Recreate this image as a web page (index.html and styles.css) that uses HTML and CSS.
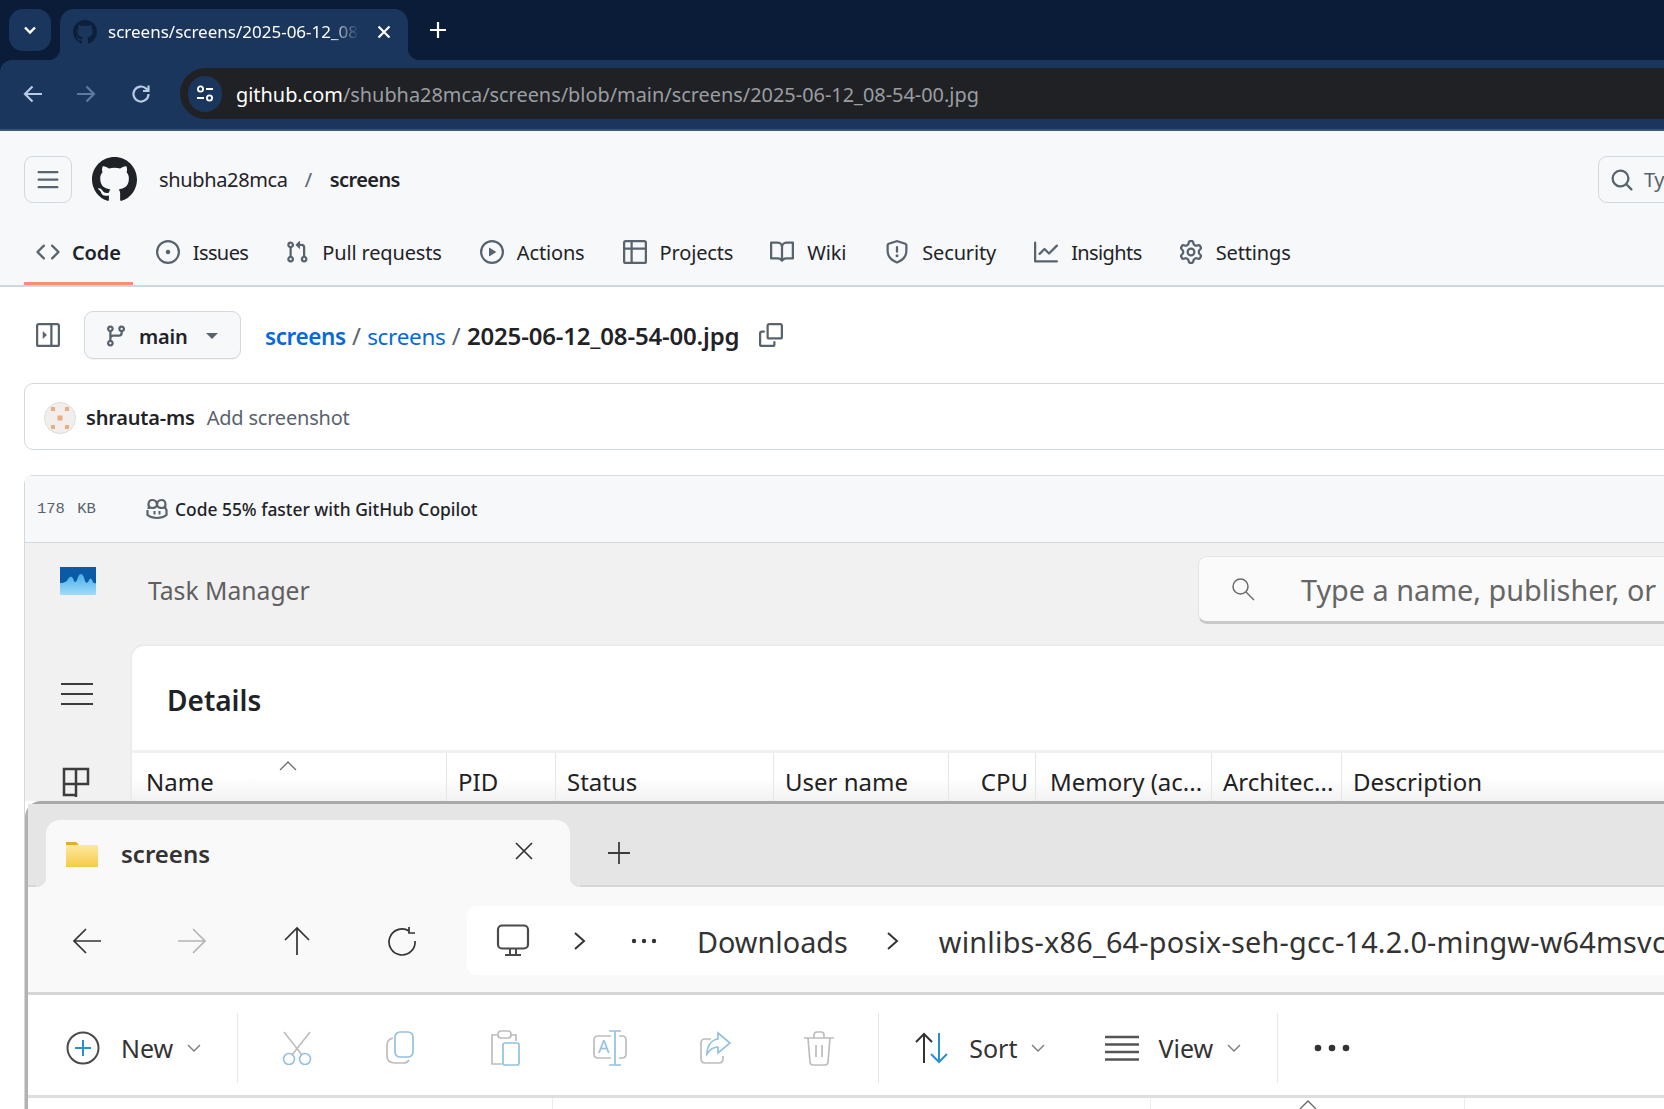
FILE: index.html
```html
<!doctype html>
<html>
<head>
	<meta charset="utf-8" />
	<title>screens/screens/2025-06-12_08-54-00.jpg</title>
	<link rel="stylesheet" href="styles.css">
</head>
<body>
	<!-- browser chrome -->
	<div class="tabstrip">
		<div class="tabsearch"><svg width="16" height="16" viewBox="0 0 16 16"><path d="M3 5.500 8 10.500 13 5.500" fill="none" stroke="#fff" stroke-width="2.400"/></svg></div>
		<div class="browsertab">
			<svg class="favicon" width="24" height="24" viewBox="0 0 16 16"><path fill="#0d1f3a" d="M8 0c4.420 0 8 3.580 8 8a8.013 8.013 0 0 1-5.450 7.590c-.4.080-.55-.17-.55-.38 0-.27.010-1.130.010-2.200 0-.75-.25-1.230-.54-1.480 1.780-.2 3.650-.88 3.650-3.950 0-.88-.31-1.590-.82-2.150.080-.2.360-1.020-.080-2.120 0 0-.67-.22-2.200.820-.64-.18-1.320-.27-2-.27-.68 0-1.360.090-2 .27-1.530-1.030-2.200-.82-2.200-.82-.44 1.100-.16 1.920-.080 2.120-.51.560-.82 1.280-.82 2.150 0 3.060 1.860 3.750 3.640 3.950-.23.2-.44.55-.51 1.070-.46.210-1.610.55-2.330-.66-.15-.24-.6-.83-1.230-.82-.67.010-.27.380.010.530.34.190.73.9.820 1.130.16.450.68 1.310 2.690.94 0 .67.010 1.300.010 1.490 0 .210-.15.450-.55.380A7.995 7.995 0 0 1 0 8c0-4.420 3.580-8 8-8Z"/></svg>
			<span class="tabtitle">screens/screens/2025-06-12_08</span>
			<svg width="14" height="14" viewBox="0 0 14 14"><path d="M1.500 1.500 12.500 12.500M12.500 1.500 1.500 12.500" stroke="#fff" stroke-width="2.200"/></svg>
		</div>
		<svg class="newtab" width="18" height="18" viewBox="0 0 18 18"><path d="M9 1V17M1 9H17" stroke="#fff" stroke-width="2.200"/></svg>
	</div>
	<div class="toolbar">
		<svg width="22" height="22" viewBox="0 0 22 22"><path d="M20 11H3M10.500 3.500 3 11l7.500 7.500" fill="none" stroke="#b9cbe4" stroke-width="2.200"/></svg>
		<svg class="toolforward" width="22" height="22" viewBox="0 0 22 22"><path d="M2 11H19M11.500 3.500 19 11l-7.500 7.500" fill="none" stroke="#5d7a9f" stroke-width="2.200"/></svg>
		<svg class="toolreload" width="22" height="22" viewBox="0 0 22 22"><path d="M18.500 11a7.500 7.500 0 1 1-2.200-5.300L18.500 8M18.500 2.500V8H13" fill="none" stroke="#b9cbe4" stroke-width="2.200"/></svg>
		<div class="omnibox">
			<div class="siteinfo"><svg width="20" height="20" viewBox="0 0 20 20"><circle cx="5.500" cy="5" r="2.600" fill="none" stroke="#fff" stroke-width="1.800"/><path d="M11 5h7M2 14h7" stroke="#fff" stroke-width="1.800"/><circle cx="14.500" cy="14" r="2.600" fill="none" stroke="#fff" stroke-width="1.800"/></svg></div>
			<span class="url"><b>github.com</b>/shubha28mca/screens/blob/main/screens/2025-06-12_08-54-00.jpg</span>
		</div>
	</div>

	<!-- github header -->
	<div class="ghheader">
		<div class="ghtop">
			<div class="menubtn"><svg width="24" height="24" viewBox="0 0 16 16"><path fill="#59636e" d="M1 2.750A.75.75 0 0 1 1.750 2h12.500a.75.75 0 0 1 0 1.500H1.750A.75.75 0 0 1 1 2.750Zm0 5A.75.75 0 0 1 1.750 7h12.500a.75.75 0 0 1 0 1.500H1.750A.75.75 0 0 1 1 7.750ZM1.750 12h12.500a.75.75 0 0 1 0 1.500H1.750a.75.75 0 0 1 0-1.500Z"/></svg></div>
			<svg class="ghlogo" width="45" height="45" viewBox="0 0 16 16"><path fill="#1f2328" d="M8 0c4.420 0 8 3.580 8 8a8.013 8.013 0 0 1-5.450 7.590c-.4.080-.55-.17-.55-.38 0-.27.010-1.130.010-2.200 0-.75-.25-1.230-.54-1.480 1.780-.2 3.650-.88 3.650-3.950 0-.88-.31-1.590-.82-2.150.080-.2.360-1.020-.080-2.120 0 0-.67-.22-2.200.820-.64-.18-1.320-.27-2-.27-.68 0-1.360.090-2 .27-1.530-1.030-2.200-.82-2.200-.82-.44 1.100-.16 1.920-.080 2.120-.51.560-.82 1.280-.82 2.150 0 3.060 1.860 3.750 3.640 3.950-.23.2-.44.55-.51 1.070-.46.210-1.610.55-2.330-.66-.15-.24-.6-.83-1.230-.82-.67.010-.27.380.010.530.34.190.73.9.820 1.130.16.450.68 1.310 2.690.94 0 .67.010 1.300.010 1.490 0 .210-.15.450-.55.380A7.995 7.995 0 0 1 0 8c0-4.420 3.580-8 8-8Z"/></svg>
			<span class="owner">shubha28mca</span>
			<span class="ownerslash">/</span>
			<span class="reponame">screens</span>
			<div class="ghsearch"><svg width="24" height="24" viewBox="0 0 16 16"><path fill="#59636e" d="M10.680 11.740a6 6 0 0 1-7.922-8.982 6 6 0 0 1 8.982 7.922l3.040 3.040a.749.749 0 0 1-.326 1.275.749.749 0 0 1-.734-.215ZM11.500 7a4.499 4.499 0 1 0-8.997 0A4.499 4.499 0 0 0 11.500 7Z"/></svg><span>Ty</span></div>
		</div>
		<div class="repotabs">
			<div class="repotab selected"><svg width="24" height="24" viewBox="0 0 16 16"><path d="m11.280 3.220 4.250 4.250a.75.75 0 0 1 0 1.060l-4.250 4.250a.749.749 0 0 1-1.275-.326.749.749 0 0 1 .215-.734L13.940 8l-3.720-3.720a.749.749 0 0 1 .326-1.275.749.749 0 0 1 .734.215Zm-6.560 0a.751.751 0 0 1 1.042.018.751.751 0 0 1 .018 1.042L2.060 8l3.720 3.720a.749.749 0 0 1-.326 1.275.749.749 0 0 1-.734-.215L.47 8.530a.75.75 0 0 1 0-1.060Z"/></svg>Code</div>
			<div class="repotab"><svg width="24" height="24" viewBox="0 0 16 16"><path d="M8 9.500a1.500 1.500 0 1 0 0-3 1.500 1.500 0 0 0 0 3Z"/><path d="M8 0a8 8 0 1 1 0 16A8 8 0 0 1 8 0ZM1.500 8a6.500 6.500 0 1 0 13 0 6.500 6.500 0 0 0-13 0Z"/></svg>Issues</div>
			<div class="repotab"><svg width="24" height="24" viewBox="0 0 16 16"><path d="M1.500 3.250a2.250 2.250 0 1 1 3 2.122v5.256a2.251 2.251 0 1 1-1.500 0V5.372A2.250 2.250 0 0 1 1.500 3.250Zm5.677-.177L9.573.677A.25.25 0 0 1 10 .854V2.500h1A2.500 2.500 0 0 1 13.500 5v5.628a2.251 2.251 0 1 1-1.500 0V5a1 1 0 0 0-1-1h-1v1.646a.25.25 0 0 1-.427.177L7.177 3.427a.25.25 0 0 1 0-.354ZM3.750 2.500a.75.75 0 1 0 0 1.500.75.75 0 0 0 0-1.500Zm0 9.500a.75.75 0 1 0 0 1.500.75.75 0 0 0 0-1.500Zm8.250.75a.75.75 0 1 0 1.500 0 .75.75 0 0 0-1.500 0Z"/></svg>Pull requests</div>
			<div class="repotab"><svg width="24" height="24" viewBox="0 0 16 16"><path d="M8 0a8 8 0 1 1 0 16A8 8 0 0 1 8 0ZM1.500 8a6.500 6.500 0 1 0 13 0 6.500 6.500 0 0 0-13 0Zm4.879-2.773 4.264 2.559a.25.25 0 0 1 0 .428l-4.264 2.559A.25.25 0 0 1 6 10.559V5.442a.25.25 0 0 1 .379-.215Z"/></svg>Actions</div>
			<div class="repotab"><svg width="24" height="24" viewBox="0 0 16 16"><path d="M0 1.750C0 .784.784 0 1.750 0h12.500C15.216 0 16 .784 16 1.750v12.500A1.750 1.750 0 0 1 14.250 16H1.750A1.750 1.750 0 0 1 0 14.250ZM6.500 6.500v8h7.750a.25.25 0 0 0 .25-.25V6.500Zm8-1.500V1.750a.25.25 0 0 0-.25-.25H6.500V5Zm-13 1.500v7.750c0 .138.112.25.25.25H5v-8ZM5 5V1.500H1.750a.25.25 0 0 0-.25.25V5Z"/></svg>Projects</div>
			<div class="repotab"><svg width="24" height="24" viewBox="0 0 16 16"><path d="M0 1.750A.75.75 0 0 1 .75 1h4.253c1.227 0 2.317.59 3 1.501A3.743 3.743 0 0 1 11.006 1h4.245a.75.75 0 0 1 .75.75v10.500a.75.75 0 0 1-.75.75h-4.507a2.250 2.250 0 0 0-1.591.659l-.622.621a.75.75 0 0 1-1.060 0l-.622-.621A2.250 2.250 0 0 0 5.258 13H.75a.75.75 0 0 1-.75-.75Zm7.251 10.324.004-5.073-.002-2.253A2.250 2.250 0 0 0 5.003 2.500H1.500v9h3.757a3.750 3.750 0 0 1 1.994.574ZM8.755 4.750l-.004 7.322a3.752 3.752 0 0 1 1.992-.572H14.500v-9h-3.495a2.250 2.250 0 0 0-2.250 2.250Z"/></svg>Wiki</div>
			<div class="repotab"><svg width="24" height="24" viewBox="0 0 16 16"><path d="M7.467.133a1.748 1.748 0 0 1 1.066 0l5.250 1.680A1.750 1.750 0 0 1 15 3.480V7c0 1.566-.32 3.182-1.303 4.682-.983 1.498-2.585 2.813-5.032 3.855a1.697 1.697 0 0 1-1.330 0c-2.447-1.042-4.049-2.357-5.032-3.855C1.320 10.182 1 8.566 1 7V3.480a1.750 1.750 0 0 1 1.217-1.667Zm.61 1.429a.25.25 0 0 0-.153 0l-5.250 1.680a.25.25 0 0 0-.174.238V7c0 1.358.275 2.666 1.057 3.860.784 1.194 2.121 2.340 4.366 3.297a.196.196 0 0 0 .154 0c2.245-.956 3.582-2.104 4.366-3.298C13.225 9.666 13.500 8.360 13.500 7V3.480a.251.251 0 0 0-.174-.237l-5.250-1.680ZM8.750 4.750v3a.75.75 0 0 1-1.500 0v-3a.75.75 0 0 1 1.500 0ZM9 10.500a1 1 0 1 1-2 0 1 1 0 0 1 2 0Z"/></svg>Security</div>
			<div class="repotab"><svg width="24" height="24" viewBox="0 0 16 16"><path d="M1.500 1.750V13.500h13.750a.75.75 0 0 1 0 1.500H.75a.75.75 0 0 1-.75-.75V1.750a.75.75 0 0 1 1.500 0Zm14.280 2.530-5.250 5.250a.75.75 0 0 1-1.060 0L7 7.060 4.280 9.780a.751.751 0 0 1-1.042-.018.751.751 0 0 1-.018-1.042l3.250-3.250a.75.75 0 0 1 1.060 0L10 7.940l4.720-4.720a.751.751 0 0 1 1.042.018.751.751 0 0 1 .018 1.042Z"/></svg>Insights</div>
			<div class="repotab"><svg width="24" height="24" viewBox="0 0 16 16"><path d="M8 0a8.200 8.200 0 0 1 .701.031C9.444.095 9.990.645 10.160 1.290l.288 1.107c.018.066.079.158.212.224.231.114.454.243.668.386.123.082.233.09.299.071l1.103-.303c.644-.176 1.392.021 1.820.63.27.385.506.792.704 1.218.315.675.111 1.422-.364 1.891l-.814.806c-.049.048-.098.147-.088.294.016.257.016.515 0 .772-.01.147.038.246.088.294l.814.806c.475.469.679 1.216.364 1.891a7.977 7.977 0 0 1-.704 1.217c-.428.61-1.176.807-1.820.63l-1.102-.302c-.067-.019-.177-.011-.3.071a5.909 5.909 0 0 1-.668.386c-.133.066-.194.158-.211.224l-.29 1.106c-.168.646-.715 1.196-1.458 1.260a8.006 8.006 0 0 1-1.402 0c-.743-.064-1.289-.614-1.458-1.260l-.289-1.106c-.018-.066-.079-.158-.212-.224a5.738 5.738 0 0 1-.668-.386c-.123-.082-.233-.09-.299-.071l-1.103.303c-.644.176-1.392-.021-1.820-.63a8.120 8.120 0 0 1-.704-1.218c-.315-.675-.111-1.422.363-1.891l.815-.806c.05-.048.098-.147.088-.294a6.214 6.214 0 0 1 0-.772c.01-.147-.038-.246-.088-.294l-.815-.806C.635 6.045.431 5.298.746 4.623a7.920 7.920 0 0 1 .704-1.217c.428-.61 1.176-.807 1.820-.63l1.102.302c.067.019.177.011.3-.071.214-.143.437-.272.668-.386.133-.066.194-.158.211-.224l.29-1.106C6.009.645 6.556.095 7.299.03 7.530.01 7.764 0 8 0Zm-.571 1.525c-.036.003-.108.036-.137.146l-.289 1.105c-.147.561-.549.967-.998 1.189-.173.086-.34.183-.5.29-.417.278-.97.423-1.529.27l-1.103-.303c-.109-.03-.175.016-.195.045-.22.312-.412.644-.573.99-.014.031-.021.11.059.19l.815.806c.411.406.562.957.53 1.456a4.709 4.709 0 0 0 0 .582c.032.499-.119 1.050-.53 1.456l-.815.806c-.081.08-.073.159-.059.19.162.346.353.677.573.989.02.03.085.076.195.046l1.102-.303c.56-.153 1.113-.008 1.530.27.161.107.328.204.501.29.447.222.85.629.997 1.189l.289 1.105c.029.109.101.143.137.146a6.600 6.600 0 0 0 1.142 0c.036-.003.108-.036.137-.146l.289-1.105c.147-.561.549-.967.998-1.189.173-.086.34-.183.5-.29.417-.278.97-.423 1.529-.27l1.103.303c.109.029.175-.016.195-.045.22-.313.411-.644.573-.99.014-.031.021-.11-.059-.19l-.815-.806c-.411-.406-.562-.957-.53-1.456a4.709 4.709 0 0 0 0-.582c-.032-.499.119-1.050.53-1.456l.815-.806c.081-.08.073-.159.059-.19a6.464 6.464 0 0 0-.573-.989c-.02-.03-.085-.076-.195-.046l-1.102.303c-.56.153-1.113.008-1.530-.27a4.440 4.440 0 0 0-.501-.29c-.447-.222-.85-.629-.997-1.189l-.289-1.105c-.029-.11-.101-.143-.137-.146a6.600 6.600 0 0 0-1.142 0ZM11 8a3 3 0 1 1-6 0 3 3 0 0 1 6 0ZM9.500 8a1.500 1.500 0 1 0-3.001.001A1.500 1.500 0 0 0 9.500 8Z"/></svg>Settings</div>
		</div>
	</div>

	<!-- file view -->
	<div class="content">
		<div class="pathrow">
			<svg class="paneltoggle" width="24" height="24" viewBox="0 0 16 16"><path fill="#59636e" d="M0 1.750C0 .784.784 0 1.750 0h12.500C15.216 0 16 .784 16 1.750v12.500A1.750 1.750 0 0 1 14.250 16H1.750A1.750 1.750 0 0 1 0 14.250Zm1.750-.25a.25.25 0 0 0-.25.25v12.500c0 .138.112.25.25.25H9.500v-13Zm12.500 13a.25.25 0 0 0 .25-.25V1.750a.25.25 0 0 0-.25-.25H11v13Z"/><path fill="#59636e" d="M4.500 5.300 7.300 8l-2.800 2.700Z"/></svg>
			<div class="branchbtn">
				<svg width="24" height="24" viewBox="0 0 16 16"><path fill="#59636e" d="M9.500 3.250a2.250 2.250 0 1 1 3 2.122V6A2.500 2.500 0 0 1 10 8.500H6a1 1 0 0 0-1 1v1.128a2.251 2.251 0 1 1-1.500 0V5.372a2.250 2.250 0 1 1 1.500 0v1.836A2.493 2.493 0 0 1 6 7h4a1 1 0 0 0 1-1v-.628A2.250 2.250 0 0 1 9.500 3.250Zm-6 0a.75.75 0 1 0 1.500 0 .75.75 0 0 0-1.500 0Zm8.250-.75a.75.75 0 1 0 0 1.500.75.75 0 0 0 0-1.500ZM4.250 12a.75.75 0 1 0 0 1.500.75.75 0 0 0 0-1.500Z"/></svg>
				<span>main</span>
				<div class="caret"></div>
			</div>
			<div class="crumbs"><a class="crumbroot">screens</a> <i>/</i> <a>screens</a> <i>/</i> <strong>2025-06-12_08-54-00.jpg</strong></div>
			<svg class="copyicon" width="24" height="24" viewBox="0 0 16 16"><path fill="#59636e" d="M0 6.750C0 5.784.784 5 1.750 5h1.500a.75.75 0 0 1 0 1.500h-1.500a.25.25 0 0 0-.25.25v7.500c0 .138.112.25.25.25h7.500a.25.25 0 0 0 .25-.25v-1.500a.75.75 0 0 1 1.500 0v1.500A1.750 1.750 0 0 1 9.250 16h-7.500A1.750 1.750 0 0 1 0 14.250Z"/><path fill="#59636e" d="M5 1.750C5 .784 5.784 0 6.750 0h7.500C15.216 0 16 .784 16 1.750v7.500A1.750 1.750 0 0 1 14.250 11h-7.500A1.750 1.750 0 0 1 5 9.250Zm1.750-.25a.25.25 0 0 0-.25.25v7.500c0 .138.112.25.25.25h7.500a.25.25 0 0 0 .25-.25v-7.500a.25.25 0 0 0-.25-.25Z"/></svg>
		</div>

		<div class="commitbox">
			<svg class="avatar" width="32" height="32" viewBox="0 0 32 32"><circle cx="16" cy="16" r="15.500" fill="#f1eeeb" stroke="#e0ddd9"/><path fill="#e8ae82" d="M13.500 13.500h5v5h-5ZM7 5h4v4H7ZM21 5h4v4h-4ZM7 23h4v4H7ZM21 23h4v4h-4Z"/></svg>
			<span class="author">shrauta-ms</span>
			<span class="message">Add screenshot</span>
		</div>

		<div class="filebox">
			<div class="fileinfo">
				<span class="filesize">178 KB</span>
				<svg width="24" height="24" viewBox="0 0 24 24"><path fill="none" stroke="#59636e" stroke-width="2.200" d="M12 8.500c-1 2-3 2.500-5 2.500-2.500 0-3.500-1.500-3.500-3.500C3.500 4.500 5 3 7.500 3s4.500 1.500 4.500 5.500c0-4 2-5.500 4.500-5.500s4 1.500 4 4.500c0 2-1 3.500-3.500 3.500-2 0-4-.5-5-2.500ZM2.500 13v5c2.500 2 6 3 9.500 3s7-1 9.500-3v-5l-1-1.500v-1M3.500 10.500V12"/><path fill="#59636e" d="M8.500 14h2v3.500h-2ZM13.500 14h2v3.500h-2Z"/></svg>
				<span class="copilot">Code 55% faster with GitHub Copilot</span>
			</div>

			<!-- the screenshot in the file: task manager -->
			<div class="taskmgr">
				<div class="tmtop">
					<svg class="tmlogo" width="36" height="28" viewBox="0 0 36 28"><defs><linearGradient id="tmsky" x1="0" y1="0" x2="0" y2="1"><stop offset="0" stop-color="#2f9fe6"/><stop offset="1" stop-color="#9ddcf9"/></linearGradient></defs><rect width="36" height="28" rx="1.500" fill="url(#tmsky)"/><path fill="#0b5aa6" d="M0 0h36v16c-2 1-3-.5-4-3-1-2-2-2-3 0-1 3-3 4-4 1-1-4-2-7-4-7s-3 3-4 6c-1 2-2 3-3 1-1-3-2-5-4-4-2 1-3 5-5 5-2 1-3 1-5 1Z"/></svg>
					<span class="tmtitle">Task Manager</span>
					<div class="tmsearch">
						<svg width="24" height="24" viewBox="0 0 24 24"><circle cx="9.500" cy="9.500" r="7.500" fill="none" stroke="#6b6b6b" stroke-width="1.500"/><path d="M15 15 23 23" stroke="#6b6b6b" stroke-width="1.500"/></svg>
						<span>Type a name, publisher, or</span>
					</div>
				</div>
				<div class="tmmain">
					<div class="tmside">
						<svg width="32" height="24" viewBox="0 0 32 24"><path d="M0 2H32M0 12H32M0 22H32" stroke="#3c3c3c" stroke-width="2.200"/></svg>
						<svg class="tmperf" width="30" height="32" viewBox="0 0 30 32"><path fill="none" stroke="#3c3c3c" stroke-width="2.500" d="M3 3h24v15H3ZM15 3V31M3 18V29h12"/></svg>
					</div>
					<div class="tmpanel">
						<div class="tmheading">Details</div>
						<div class="tmcols">
							<div class="tmcol tmname">Name<svg width="18" height="10" viewBox="0 0 18 10"><path d="M1 9 9 1l8 8" fill="none" stroke="#6b6b6b" stroke-width="1.300"/></svg></div>
							<div class="tmcol">PID</div>
							<div class="tmcol">Status</div>
							<div class="tmcol">User name</div>
							<div class="tmcol tmright">CPU</div>
							<div class="tmcol tmmemory">Memory (ac...</div>
							<div class="tmcol">Architec...</div>
							<div class="tmcol tmlast">Description</div>
						</div>
					</div>
				</div>
			</div>

			<!-- file explorer on top of it -->
			<div class="explorer">
				<div class="extabs">
					<div class="extab">
						<svg width="34" height="26" viewBox="0 0 34 26"><path fill="#e3ae2f" d="M1 1h10l3 3H1Z"/><defs><linearGradient id="folder" x1="0" y1="0" x2="0" y2="1"><stop offset="0" stop-color="#fce9a0"/><stop offset="1" stop-color="#f7c948"/></linearGradient></defs><rect x="1" y="4" width="32" height="22" fill="url(#folder)"/></svg>
						<span>screens</span>
						<svg class="extabclose" width="20" height="20" viewBox="0 0 20 20"><path d="M2 2 18 18M18 2 2 18" stroke="#333" stroke-width="1.700"/></svg>
					</div>
					<svg class="exnewtab" width="22" height="22" viewBox="0 0 22 22"><path d="M11 0V22M0 11H22" stroke="#3c3c3c" stroke-width="1.800"/></svg>
				</div>
				<div class="exnav">
					<svg width="30" height="28" viewBox="0 0 30 28"><path d="M29 14H2M14 2 2 14l12 12" fill="none" stroke="#333" stroke-width="1.700"/></svg>
					<svg width="30" height="28" viewBox="0 0 30 28"><path d="M1 14H28M16 2l12 12-12 12" fill="none" stroke="#b4b4b4" stroke-width="1.700"/></svg>
					<svg width="30" height="30" viewBox="0 0 30 30"><path d="M15 29V2M3 14 15 2l12 12" fill="none" stroke="#333" stroke-width="1.700"/></svg>
					<svg width="30" height="30" viewBox="0 0 30 30"><path d="M22 5A13 13 0 1 0 28 15M22 1V7h6" fill="none" stroke="#333" stroke-width="1.700"/></svg>
					<div class="exaddress">
						<svg width="34" height="34" viewBox="0 0 34 34"><rect x="2" y="1.500" width="30" height="23" rx="4" fill="#fff" stroke="#4a4a4a" stroke-width="2.200"/><path d="M14 25v5M20 25v5M9 31H25" stroke="#4a4a4a" stroke-width="2"/></svg>
						<svg class="exchev" width="14" height="20" viewBox="0 0 14 20"><path d="M2 2l9 8-9 8" fill="none" stroke="#333" stroke-width="2"/></svg>
						<svg class="exdots" width="26" height="6" viewBox="0 0 26 6"><circle cx="3" cy="3" r="2.200" fill="#333"/><circle cx="13" cy="3" r="2.200" fill="#333"/><circle cx="23" cy="3" r="2.200" fill="#333"/></svg>
						<span class="expart">Downloads</span>
						<svg class="exchev2" width="14" height="20" viewBox="0 0 14 20"><path d="M2 2l9 8-9 8" fill="none" stroke="#333" stroke-width="2"/></svg>
						<span class="expart expath">winlibs-x86_64-posix-seh-gcc-14.2.0-mingw-w64msvc</span>
					</div>
				</div>
				<div class="excmd">
					<div class="cmdbtn cmdnew">
						<svg width="34" height="34" viewBox="0 0 34 34"><circle cx="17" cy="17" r="15.500" fill="#fff" stroke="#4a4a4a" stroke-width="2"/><path d="M17 9V25M9 17H25" stroke="#2a8fd0" stroke-width="2"/></svg>
						<span>New</span>
						<svg width="14" height="8" viewBox="0 0 14 8"><path d="M1 1l6 6 6-6" fill="none" stroke="#777" stroke-width="1.300"/></svg>
					</div>
					<div class="cmdsep"></div>
					<div class="cmdicons">
						<svg width="32" height="34" viewBox="0 0 32 34"><path d="M3 1 21 24M29 1 11 24" stroke="#bdbdbd" stroke-width="1.600"/><circle cx="8" cy="28" r="5.500" fill="none" stroke="#94c1de" stroke-width="1.600"/><circle cx="24" cy="28" r="5.500" fill="none" stroke="#94c1de" stroke-width="1.600"/></svg>
						<svg width="32" height="34" viewBox="0 0 32 34"><rect x="10" y="1" width="18" height="25" rx="5" fill="none" stroke="#94c1de" stroke-width="1.700"/><path d="M8 7c-4 1-6 3-6 7v11c0 5 3 7 8 7h8c3 0 5-1 6-3" fill="none" stroke="#bdbdbd" stroke-width="1.700"/></svg>
						<svg width="32" height="36" viewBox="0 0 32 36"><path d="M8 5H3v29h10" fill="none" stroke="#bdbdbd" stroke-width="1.700"/><path d="M22 5h5v6" fill="none" stroke="#bdbdbd" stroke-width="1.700"/><rect x="9" y="1" width="13" height="7" rx="3" fill="none" stroke="#bdbdbd" stroke-width="1.700"/><rect x="14" y="13" width="16" height="22" rx="2" fill="none" stroke="#94c1de" stroke-width="1.700"/></svg>
						<svg width="34" height="36" viewBox="0 0 34 36"><path d="M18 6H5Q1 6 1 10V24Q1 28 5 28H18M26 6h3q4 0 4 4V24q0 4-4 4h-3" fill="none" stroke="#bdbdbd" stroke-width="1.700"/><path d="M16 1h12M16 35h12M22 1V35" stroke="#94c1de" stroke-width="1.700"/><text x="5" y="23" font-family="Noto Sans" font-size="18" fill="#94c1de">A</text></svg>
						<svg width="32" height="34" viewBox="0 0 32 34"><path d="M12 8H6Q2 8 2 12V28Q2 32 6 32H20Q24 32 24 28V25" fill="none" stroke="#bdbdbd" stroke-width="1.700"/><path d="M19 2 31 12 19 22V16C14 16 11 18 8 23 8 15 12 9 19 8Z" fill="none" stroke="#94c1de" stroke-width="1.700"/></svg>
						<svg width="32" height="36" viewBox="0 0 32 36"><path d="M1 8H31M5 8l2 24q.3 3 3 3h12q2.700 0 3-3l2-24M11 8V5q0-3 3-3h4q3 0 3 3v3M13 15V27M19 15V27" fill="none" stroke="#bdbdbd" stroke-width="1.700"/></svg>
					</div>
					<div class="cmdsep"></div>
					<div class="cmdbtn cmdsort">
						<svg width="36" height="32" viewBox="0 0 36 32"><path d="M10 31V2M2 10l8-8 8 8" fill="none" stroke="#333" stroke-width="2"/><path d="M25 1V30M17 22l8 8 8-8" fill="none" stroke="#2a8fd0" stroke-width="2"/></svg>
						<span>Sort</span>
						<svg width="14" height="8" viewBox="0 0 14 8"><path d="M1 1l6 6 6-6" fill="none" stroke="#777" stroke-width="1.300"/></svg>
					</div>
					<div class="cmdbtn cmdview">
						<svg width="36" height="26" viewBox="0 0 36 26"><path d="M1 2H35M1 9.500H35M1 17H35M1 24.500H35" stroke="#555" stroke-width="2.400"/></svg>
						<span>View</span>
						<svg width="14" height="8" viewBox="0 0 14 8"><path d="M1 1l6 6 6-6" fill="none" stroke="#777" stroke-width="1.300"/></svg>
					</div>
					<div class="cmdsep"></div>
					<svg class="cmdmore" width="36" height="8" viewBox="0 0 36 8"><circle cx="4" cy="4" r="3.300" fill="#333"/><circle cx="18" cy="4" r="3.300" fill="#333"/><circle cx="32" cy="4" r="3.300" fill="#333"/></svg>
				</div>
				<div class="exlist">
					<div class="exlistcol excol1"></div>
					<div class="exlistcol excol2"></div>
					<div class="exlistcol excol3"><svg width="18" height="9" viewBox="0 0 18 9"><path d="M1 9 9 1l8 8" fill="none" stroke="#666" stroke-width="1.300"/></svg></div>
				</div>
			</div>
		</div>
	</div>
</body>
</html>
```

FILE: styles.css
```css
*
{
	box-sizing: border-box;
}

html, body
{
	margin: 0;
	padding: 0;
	height: 1109px;
	overflow: hidden;
}

body
{
	width: 1664px;
	background: #0a1c37;
	font-family: "Noto Sans", "Open Sans", sans-serif;
	color: #1f2328;
}

svg
{
	flex: none;
	display: block;
}

/* browser chrome */

.tabstrip
{
	height: 60px;
	background: #0a1c37;
	display: flex;
	align-items: flex-start;
	padding: 9px 0 0 9px;
}

.tabsearch
{
	width: 42px;
	height: 42px;
	background: #1b365d;
	border-radius: 14px;
	display: flex;
	align-items: center;
	justify-content: center;
}

.browsertab
{
	position: relative;
	width: 348px;
	height: 51px;
	margin-left: 9px;
	padding: 0 17px 6px 13px;
	background: #1b365d;
	border-radius: 14px 14px 0 0;
	display: flex;
	align-items: center;
	color: #fff;
	font-size: 17px;
}

/* the little flares at the foot of the tab */
.browsertab::before, .browsertab::after
{
	content: "";
	position: absolute;
	bottom: 0;
	width: 12px;
	height: 12px;
}

.browsertab::before
{
	left: -12px;
	background: radial-gradient(circle at 0 0, transparent 12px, #1b365d 12.5px);
}

.browsertab::after
{
	right: -12px;
	background: radial-gradient(circle at 100% 0, transparent 12px, #1b365d 12.5px);
}

.tabtitle
{
	width: 251px;
	margin: 0 18px 0 11px;
	white-space: nowrap;
	-webkit-mask-image: linear-gradient(to right, #000 88%, transparent);
	mask-image: linear-gradient(to right, #000 88%, transparent);
}

.newtab
{
	margin: 12px 0 0 21px;
}

.toolbar
{
	height: 71px;
	background: #1b365d;
	border-bottom: 2px solid #3a5578;
	border-top-left-radius: 12px;
	display: flex;
	align-items: center;
	padding: 0 0 2px 22px;
}

.toolforward
{
	margin-left: 31px;
}

.toolreload
{
	margin-left: 33px;
}

.omnibox
{
	flex: 1;
	height: 51px;
	margin-left: 28px;
	margin-right: -30px;
	background: #202124;
	border-radius: 26px;
	display: flex;
	align-items: center;
	padding-left: 8px;
}

.siteinfo
{
	width: 34px;
	height: 36px;
	background: #1b365d;
	border-radius: 18px;
	display: flex;
	align-items: center;
	justify-content: center;
}

.url
{
	margin-left: 14px;
	padding-top: 2px;
	font-size: 19.9px;
	color: #9a9ea3;
	white-space: nowrap;
}

.url b
{
	font-weight: 400;
	color: #fff;
}

/* github header */

.ghheader
{
	height: 156px;
	background: #f6f8fa;
	border-bottom: 2px solid #d0d7de;
}

.ghtop
{
	height: 94px;
	display: flex;
	align-items: center;
	padding: 3px 0 0 24px;
	font-size: 20px;
	letter-spacing: -0.35px;
}

.menubtn
{
	width: 48px;
	height: 47px;
	border: 1px solid #d1d9e0;
	border-radius: 9px;
	display: flex;
	align-items: center;
	justify-content: center;
}

.ghlogo
{
	margin-left: 20px;
}

.owner
{
	margin-left: 22px;
}

.ownerslash
{
	margin-left: 17px;
	color: #59636e;
}

.reponame
{
	margin-left: 18px;
	font-weight: 600;
	letter-spacing: -0.6px;
}

.ghsearch
{
	margin-left: auto;
	margin-right: -20px;
	width: 86px;
	height: 47px;
	border: 1px solid #d1d9e0;
	border-radius: 9px;
	display: flex;
	align-items: center;
	gap: 10px;
	padding-left: 11px;
	color: #59636e;
}

.repotabs
{
	height: 60px;
	display: flex;
	padding-left: 24px;
	gap: 13px;
}

.repotab
{
	height: 60px;
	padding: 0 12px 6px;
	display: flex;
	align-items: center;
	gap: 13px;
	font-size: 20px;
	letter-spacing: -0.15px;
}

.repotab svg
{
	fill: #59636e;
}

.repotab.selected
{
	gap: 12px;
	font-weight: 600;
	border-bottom: 3px solid #fd8c73;
	padding-bottom: 3px;
}

/* these labels run a bit wide or narrow in this font, nudge the tabs back */
.repotab:nth-child(2)
{
	margin-left: -2px;
	letter-spacing: -0.6px;
}

.repotab:nth-child(4), .repotab:nth-child(5), .repotab:nth-child(8)
{
	margin-left: 1px;
}

.repotab:nth-child(7)
{
	margin-left: 2px;
}

.repotab:nth-child(8)
{
	letter-spacing: -0.6px;
}

/* file view */

.content
{
	padding-left: 24px;
	width: 1700px;
	background: #fff;
}

.pathrow
{
	height: 96px;
	display: flex;
	align-items: center;
	padding-left: 12px;
}

.branchbtn
{
	width: 157px;
	height: 48px;
	margin-left: 24px;
	background: #f6f8fa;
	border: 1px solid #d1d9e0;
	border-radius: 9px;
	box-shadow: 0 1px 1px rgba(31, 35, 40, 0.05);
	display: flex;
	align-items: center;
	padding: 2px 0 0 19px;
	font-size: 20px;
	font-weight: 600;
	letter-spacing: -0.2px;
}

.branchbtn span
{
	margin-left: 11px;
}

.caret
{
	margin-left: 18px;
	border-left: 6px solid transparent;
	border-right: 6px solid transparent;
	border-top: 6px solid #59636e;
}

.crumbs
{
	margin-left: 24px;
	font-size: 24px;
	white-space: nowrap;
}

.crumbs a
{
	font-size: 22.5px;
	letter-spacing: -0.3px;
	color: #0969da;
}

.crumbs a.crumbroot
{
	font-weight: 600;
	letter-spacing: -0.4px;
}

.crumbs i
{
	font-style: normal;
	color: #59636e;
}

.crumbs strong
{
	font-weight: 600;
	letter-spacing: -0.18px;
}

.copyicon
{
	margin-left: 20px;
}

.commitbox
{
	height: 67px;
	border: 1px solid #d1d9e0;
	border-radius: 9px;
	display: flex;
	align-items: center;
	padding: 2px 0 0 19px;
	font-size: 20px;
	letter-spacing: -0.2px;
}

.author
{
	margin-left: 10px;
	font-weight: 600;
}

.message
{
	margin-left: 12px;
	color: #59636e;
}

.filebox
{
	margin-top: 25px;
	border: 1px solid #d1d9e0;
	border-bottom: 0;
	border-radius: 9px 9px 0 0;
}

.fileinfo
{
	height: 67px;
	background: #f6f8fa;
	border-bottom: 1px solid #d1d9e0;
	display: flex;
	align-items: center;
	padding-left: 12px;
}

.filesize
{
	font-family: "Liberation Mono", monospace;
	font-size: 15.5px;
	color: #59636e;
	width: 108px;
	white-space: pre;
	word-spacing: 3px;
}

.copilot
{
	margin-left: 6px;
	font-size: 17.4px;
	font-weight: 500;
}

/* task manager part of the picture */

.taskmgr
{
	height: 258px;
	overflow: hidden;
	background: #f1f1f1;
}

.tmtop
{
	height: 101px;
	display: flex;
	align-items: flex-start;
	padding-left: 35px;
}

.tmlogo
{
	margin-top: 24px;
}

.tmtitle
{
	margin: 30px 0 0 52px;
	font-size: 24.7px;
	color: #5f5f5f;
	line-height: 36px;
}

.tmsearch
{
	margin: 13px 0 0 auto;
	width: 501px;
	height: 68px;
	background: #fafafa;
	border: 1px solid #e4e4e4;
	border-bottom: 3px solid #c9c9c9;
	border-radius: 9px;
	display: flex;
	align-items: center;
	padding-left: 32px;
	font-size: 28.8px;
	color: #666;
	white-space: nowrap;
}

.tmsearch span
{
	margin-left: 46px;
}

.tmmain
{
	display: flex;
	height: 157px;
}

.tmside
{
	flex: none;
	width: 105px;
	padding: 38px 0 0 36px;
}

.tmperf
{
	margin-top: 60px;
}

.tmpanel
{
	flex: 1;
	min-width: 0;
	background: #fff;
	border-top: 2px solid #ebebeb;
	border-left: 2px solid #ebebeb;
	border-top-left-radius: 14px;
}

.tmheading
{
	height: 107px;
	padding: 34px 0 0 35px;
	font-size: 28px;
	font-weight: 600;
	line-height: 40px;
	border-bottom: 3px solid #f0f0f0;
}

.tmcols
{
	display: grid;
	grid-template-columns: 315px 109px 218px 175px 87px 176px 130px 500px;
	font-size: 24px;
	height: 60px;
	background: linear-gradient(#fff 40%, #ececec);
}

.tmcol
{
	position: relative;
	padding: 5px 0 0 11px;
	line-height: 48px;
	border-right: 1px solid #e6e6e6;
	color: #222;
	white-space: nowrap;
}

.tmname
{
	padding-left: 14px;
}

.tmname svg
{
	position: absolute;
	left: 147px;
	top: 8px;
}

.tmright
{
	text-align: right;
	padding-right: 7px;
}

.tmmemory
{
	padding-left: 14px;
}

.tmlast
{
	border-right: 0;
}

/* explorer window */

.explorer
{
	background: #f9f9f9;
	border-top: 3px solid #a9a9a9;
	border-left: 3px solid #b2b2b2;
	border-top-left-radius: 16px;
}

.extabs
{
	height: 83px;
	background: #e5e5e5;
	display: flex;
	align-items: flex-end;
	padding-left: 18px;
	border-bottom: 2px solid #d6d6d6;
}

.extab
{
	position: relative;
	width: 524px;
	height: 67px;
	margin-bottom: -2px;
	background: #f9f9f9;
	border-radius: 14px 14px 0 0;
	display: flex;
	align-items: center;
	padding: 0 0 0 19px;
	font-size: 24px;
	font-weight: 600;
	color: #333;
}

.extab::before, .extab::after
{
	content: "";
	position: absolute;
	bottom: 0;
	width: 10px;
	height: 10px;
}

.extab::before
{
	left: -10px;
	background: radial-gradient(circle at 0 0, #e5e5e5 10px, #f9f9f9 10.5px);
}

.extab::after
{
	right: -10px;
	background: radial-gradient(circle at 100% 0, #e5e5e5 10px, #f9f9f9 10.5px);
}

.extab span
{
	margin-left: 22px;
}

.extabclose
{
	margin-left: auto;
	margin-right: 36px;
	margin-bottom: 5px;
}

.exnewtab
{
	margin: 0 0 21px 38px;
}

.exnav
{
	height: 108px;
	display: flex;
	align-items: center;
	padding: 2px 0 0 44px;
	gap: 75px;
	border-bottom: 3px solid #d6d6d6;
}

.exaddress
{
	flex: 1;
	min-width: 0;
	height: 69px;
	margin-left: -25px;
	background: #fff;
	border-radius: 9px;
	display: flex;
	align-items: center;
	padding-left: 29px;
	font-size: 28.8px;
	color: #333;
	white-space: nowrap;
}

.exchev
{
	margin-left: 43px;
}

.exdots
{
	margin-left: 44px;
}

.expart
{
	margin-left: 40px;
	padding-top: 2px;
}

.exchev2
{
	margin-left: 38px;
}

.exchev2 + .expart
{
	margin-left: 39px;
}

.expath
{
	letter-spacing: 0.22px;
}

.excmd
{
	height: 103px;
	background: #fff;
	display: flex;
	align-items: center;
	padding-top: 6px;
	border-bottom: 3px solid #dedede;
	font-size: 25px;
	color: #333;
}

.cmdbtn
{
	display: flex;
	align-items: center;
}

.cmdbtn span
{
	margin: 0 14px 0 21px;
}

.cmdnew
{
	margin-left: 38px;
}

.cmdsep
{
	width: 1px;
	height: 70px;
	background: #e6e6e6;
}

.cmdnew + .cmdsep
{
	margin-left: 36px;
}

.cmdicons
{
	display: flex;
	align-items: center;
	gap: 72px;
	margin: 0 43px;
}

.cmdsort
{
	margin-left: 35px;
}

.cmdsort span
{
	margin-left: 19px;
}

.cmdview
{
	margin-left: 59px;
}

.cmdview span
{
	margin-left: 18px;
}

.cmdview + .cmdsep
{
	margin-left: 36px;
}

.cmdmore
{
	margin-left: 36px;
}

.exlist
{
	height: 20px;
	background: #fff;
	display: flex;
}

.exlistcol
{
	border-right: 1px solid #ececec;
}

.excol1
{
	width: 525px;
}

.excol2
{
	width: 598px;
}

.excol3
{
	width: 314px;
	display: flex;
	justify-content: center;
	padding-top: 2px;
}
```
